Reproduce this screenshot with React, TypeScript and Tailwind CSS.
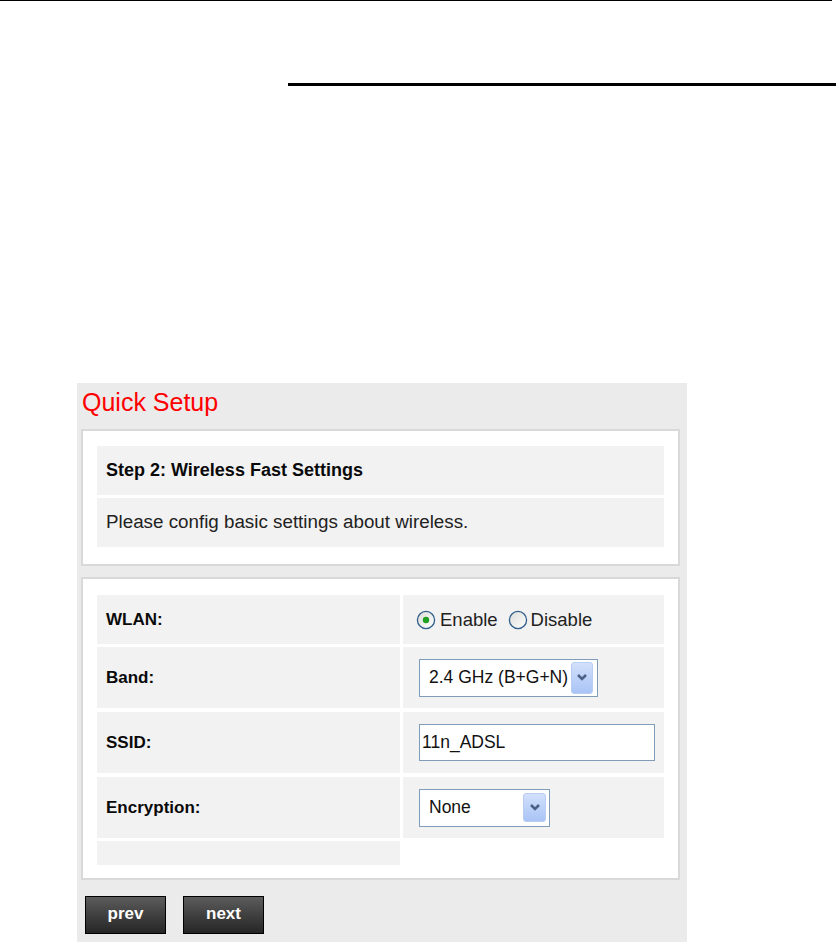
import React from 'react';

const font = { fontFamily: '"Liberation Sans", Arial, sans-serif' };

const Radio = ({ checked }: { checked?: boolean }) => (
  <svg width="20" height="20" viewBox="0 0 20 20" className="shrink-0">
    <defs>
      <linearGradient id={checked ? 'rg1' : 'rg2'} x1="0" y1="0" x2="1" y2="1">
        <stop offset="0" stopColor="#dcdcd7" />
        <stop offset="1" stopColor="#ffffff" />
      </linearGradient>
    </defs>
    <circle cx="10" cy="10" r="8.6" fill={`url(#${checked ? 'rg1' : 'rg2'})`} stroke="#2f5f8a" strokeWidth="1.3" />
    {checked && <circle cx="10" cy="10" r="3.2" fill="#21a121" />}
  </svg>
);

const Arrow = ({ className }: { className: string }) => (
  <div className={`flex items-center justify-center rounded-[3px] bg-gradient-to-b from-[#d2e0fb] to-[#a9c4f5] border border-[#b9cdf5] ${className}`}>
    <svg width="12" height="9" viewBox="0 0 12 9">
      <path d="M2 2 L6 6 L10 2" fill="none" stroke="#4d6185" strokeWidth="2.6" />
    </svg>
  </div>
);

const Label = ({ children, h }: { children: React.ReactNode; h: string }) => (
  <div className={`bg-[#f2f2f2] ${h} flex items-center pl-[9px] font-bold text-[17px] text-[#0a0a0a]`}>{children}</div>
);

export default function App() {
  return (
    <div className="bg-white w-[837px] h-[942px] overflow-hidden" style={font}>
      <div className="w-[832px] border-t border-black" />
      <div className="ml-[288px] mt-[82px] w-[548px] h-[3px] bg-black" />

      <div className="ml-[77px] mt-[297px] w-[610px] h-[600px] bg-[#ebebeb] pt-[2px] pl-[4px]">
        <div className="h-[44px] pl-[1px] pt-[2px] text-[25px] leading-[30px] text-[#ff0000]">Quick Setup</div>

        <div className="w-[599px] bg-white border-2 border-[#d9d9d9] pt-[15px] pb-[17px] px-[14px]">
          <div className="h-[49px] bg-[#f2f2f2] flex items-center pl-[9px] font-bold text-[18px] text-[#0a0a0a]">
            Step 2: Wireless Fast Settings
          </div>
          <div className="h-[49px] mt-[3px] bg-[#f2f2f2] flex items-center pl-[9px] text-[18.8px] text-[#222]">
            Please config basic settings about wireless.
          </div>
        </div>

        <div className="mt-[11px] w-[599px] bg-white border-2 border-[#d9d9d9] pt-[16px] pb-[13px] px-[14px]">
          <div className="grid grid-cols-[303px_261px] gap-x-[3px]">
            <Label h="h-[49px]">WLAN:</Label>
            <div className="bg-[#f2f2f2] h-[49px] flex items-center pl-[13px] text-[18.5px] text-[#222]">
              <Radio checked />
              <span className="ml-[4px]">Enable</span>
              <span className="ml-[10px]"><Radio /></span>
              <span className="ml-[3px]">Disable</span>
            </div>

            <Label h="h-[61px] mt-[3px]">Band:</Label>
            <div className="bg-[#f2f2f2] h-[61px] mt-[3px] flex items-center pl-[16px]">
              <div className="w-[179px] h-[38px] bg-white border border-[#7f9db9] flex items-center justify-between pl-[9px] pr-[4px] text-[17.5px] text-[#111]">
                <span>2.4 GHz (B+G+N)</span>
                <Arrow className="w-[22px] h-[32px]" />
              </div>
            </div>

            <Label h="h-[61px] mt-[4px]">SSID:</Label>
            <div className="bg-[#f2f2f2] h-[61px] mt-[4px] flex items-center pl-[16px]">
              <div className="w-[236px] h-[37px] bg-white border border-[#7f9db9] flex items-center pl-[2px] text-[17.5px] text-[#111]">
                11n_ADSL
              </div>
            </div>

            <Label h="h-[61px] mt-[4px]">Encryption:</Label>
            <div className="bg-[#f2f2f2] h-[61px] mt-[4px] flex items-center pl-[16px]">
              <div className="w-[131px] h-[38px] bg-white border border-[#7f9db9] flex items-center justify-between pl-[9px] pr-[3px] text-[17.5px] text-[#111]">
                <span>None</span>
                <Arrow className="w-[23px] h-[29px]" />
              </div>
            </div>

            <div className="bg-[#f2f2f2] h-[24px] mt-[3px]" />
            <div />
          </div>
        </div>

        <div className="mt-[16px] ml-[4px] flex gap-[17px]">
          {['prev', 'next'].map((t) => (
            <button
              key={t}
              className="w-[81px] h-[38px] border border-black bg-gradient-to-b from-[#5c5c5c] to-[#262626] text-white font-bold text-[17px] flex items-center justify-center pb-[2px]"
            >
              {t}
            </button>
          ))}
        </div>
      </div>
    </div>
  );
}
